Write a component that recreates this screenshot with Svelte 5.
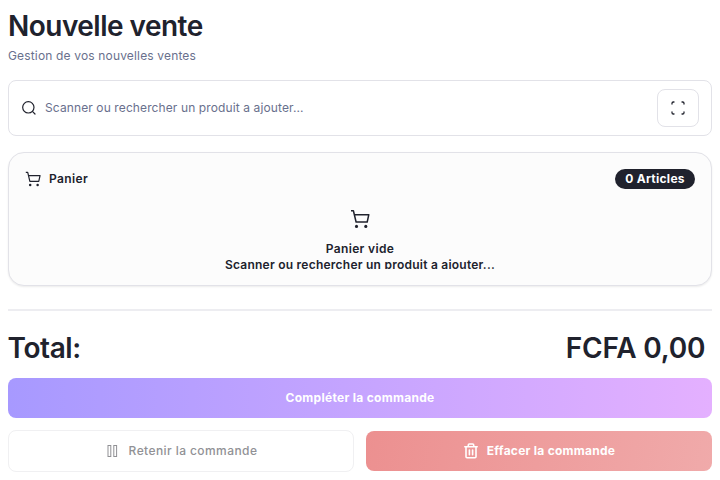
<script>
  const hint = 'Scanner ou rechercher un produit a ajouter...';
</script>

{#snippet cart(size)}
  <svg class="icon" width={size} height={size} viewBox="0 0 20 20" fill="none" stroke="currentColor" stroke-width="1.5">
    <path d="M1 1.8h2.4l2.7 11.2h11.1l1.6-7.3H4.4" stroke-linejoin="round" />
    <circle cx="6.5" cy="17.4" r="1.55" fill="currentColor" stroke="none" />
    <circle cx="15.8" cy="17.4" r="1.55" fill="currentColor" stroke="none" />
  </svg>
{/snippet}

<main>
  <h1><span>Nouvelle vente</span></h1>
  <p class="subtitle"><span>Gestion de vos nouvelles ventes</span></p>

  <div class="search">
    <svg class="icon" width="16" height="16" viewBox="0 0 24 24" fill="none" stroke="currentColor" stroke-width="1.8" stroke-linecap="round">
      <circle cx="11" cy="11" r="8.5" /><path d="m17.5 17.5 3.5 3.5" />
    </svg>
    <span class="placeholder">{hint}</span>
    <button class="scan" aria-label="Scanner">
      <svg width="16" height="16" viewBox="0 0 24 24" fill="none" stroke="currentColor" stroke-width="1.9" stroke-linecap="round" stroke-linejoin="round">
        <path d="M6 3H5a2 2 0 0 0-2 2v1M18 3h1a2 2 0 0 1 2 2v1M6 21H5a2 2 0 0 1-2-2v-1M18 21h1a2 2 0 0 0 2-2v-1" />
      </svg>
    </button>
  </div>

  <section class="card">
    <header>
      {@render cart(16)}
      <span class="cardtitle">Panier</span>
      <span class="badge"><span>0 Articles</span></span>
    </header>
    <div class="empty">
      {@render cart(20)}
      <span class="emptytitle">Panier vide</span>
      <span class="emptytext">{hint}</span>
    </div>
  </section>

  <div class="rule"></div>

  <div class="total"><span class="label">Total:</span><span class="amount">FCFA 0,00</span></div>

  <button class="complete"><span>Compléter la commande</span></button>
  <div class="actions">
    <button class="hold">
      <svg width="16" height="16" viewBox="0 0 16 16" fill="none" stroke="currentColor" stroke-width="1">
        <rect x="3" y="2.5" width="2.8" height="11" /><rect x="8.8" y="2.5" width="2.8" height="11" />
      </svg>
      <span>Retenir la commande</span>
    </button>
    <button class="clear">
      <svg width="16" height="16" viewBox="0 0 16 16" fill="none" stroke="currentColor" stroke-width="1.6" stroke-linejoin="round" stroke-linecap="round">
        <path d="M1.8 3.8h12.4M5.3 3.8V2q0-1 1-1h3.4q1 0 1 1v1.8M3 3.8v10q0 1 1 1h8q1 0 1-1v-10M6.4 7.1v4.6M9.6 7.1v4.6" />
      </svg>
      <span>Effacer la commande</span>
    </button>
  </div>
</main>

<style>
  :global(body) { background: #fff; }
  main {
    box-sizing: border-box;
    height: 480px;
    padding: 8px;
    overflow: hidden;
    display: flex;
    flex-direction: column;
    color: #20222d;
    font-family: Inter, "Liberation Sans", sans-serif;
    font-size: 12px;
    line-height: 16px;
    white-space: nowrap;
  }
  h1, p { margin: 0; }
  svg { flex: none; display: block; }
  button {
    box-sizing: border-box;
    padding: 0;
    border: 0;
    font: inherit;
    color: inherit;
    display: flex;
    align-items: center;
    justify-content: center;
  }
  h1 { height: 36px; line-height: 36px; font-size: 28px; font-weight: 600; letter-spacing: -0.52px; }
  .subtitle { margin-top: 4px; height: 16px; color: #69708d; letter-spacing: 0.16px; }
  .search {
    box-sizing: border-box;
    height: 56px;
    margin-top: 16px;
    padding: 0 12px;
    border: 1px solid #e2e2e8;
    border-radius: 8px;
    display: flex;
    align-items: center;
    gap: 8px;
  }
  .placeholder { color: #69708d; letter-spacing: 0.11px; }
  .scan { width: 42px; height: 38px; margin-left: auto; background: #fff; border: 1px solid #e2e2e8; border-radius: 8px; }
  .card {
    box-sizing: border-box;
    height: 134px;
    margin-top: 16px;
    padding: 16px;
    border: 1px solid #e2e2e8;
    border-radius: 16px;
    background: #fcfcfc;
    box-shadow: 0 1px 2px rgb(0 0 0 / 8%);
  }
  header { display: flex; align-items: center; height: 20px; gap: 8px; }
  .cardtitle { font-weight: 600; letter-spacing: 0.38px; }
  .badge {
    box-sizing: border-box;
    width: 80px;
    height: 20px;
    margin-left: auto;
    border-radius: 10px;
    background: #20222d;
    color: #fff;
    font-weight: 700;
    letter-spacing: 0.28px;
    display: flex;
    align-items: center;
    justify-content: center;
  }
  .empty { display: flex; flex-direction: column; align-items: center; margin-top: 20px; height: 60px; overflow: hidden; }
  .emptytitle { margin-top: 12px; height: 16px; font-weight: 600; letter-spacing: 0.36px; flex: none; }
  .emptytext { font-weight: 600; height: 16px; letter-spacing: 0.24px; flex: none; }
  .rule { height: 2px; margin-top: 23px; background: #ededf1; flex: none; }
  .total { height: 36px; margin-top: 19px; padding-right: 6px; line-height: 36px; font-size: 28px; font-weight: 560; display: flex; justify-content: space-between; }
  .label { letter-spacing: -0.4px; margin-left: -0.5px; }
  .amount { letter-spacing: -0.2px; margin-right: 0.8px; }
  .complete { height: 40px; margin-top: 12px; flex: none; border-radius: 8px; background: linear-gradient(90deg, #a799ff, #e4b0ff); color: #fff; font-weight: 700; letter-spacing: 0.29px; }
  .actions { display: grid; grid-template-columns: 1fr 1fr; gap: 12px; margin-top: 12px; align-items: center; }
  .hold, .clear { gap: 8px; }
  .hold { height: 42px; background: #fff; border: 1px solid #f0f0f2; border-radius: 8px; color: #919195; font-weight: 500; letter-spacing: 0.42px; }
  .clear { height: 40px; border-radius: 8px; background: linear-gradient(100deg, #ec9090, #f0aaaa); color: #fff; font-weight: 700; letter-spacing: 0.26px; }
</style>
